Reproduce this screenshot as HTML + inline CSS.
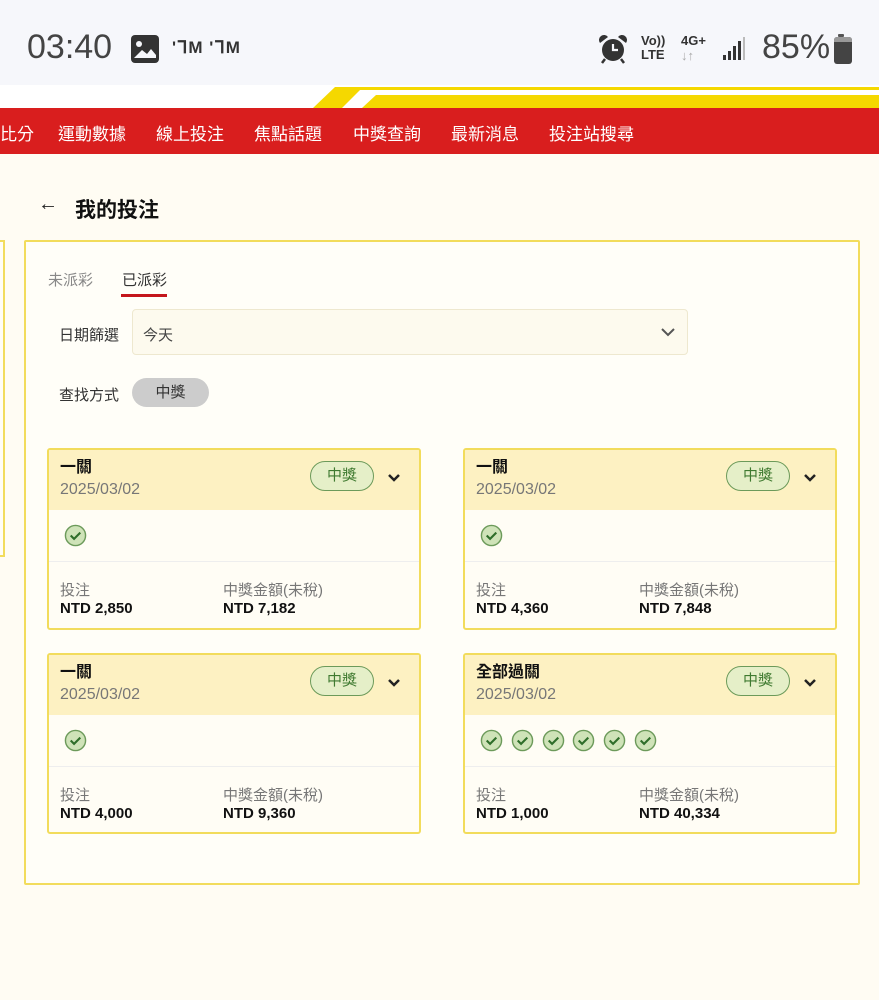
<!DOCTYPE html>
<html><head><meta charset="utf-8"><style>
*{margin:0;padding:0;box-sizing:border-box}
body{width:879px;height:1000px;position:relative;overflow:hidden;background:#fffcf3;font-family:"Liberation Sans","Noto Sans CJK TC",sans-serif;color:#222}
.a{position:absolute}
.status{left:0;top:0;width:879px;height:85px;background:#f6f7fb}
.nav{left:0;top:108px;width:879px;height:46px;background:#d91e1e;color:#fff;font-size:17px}
.nav span{position:absolute;top:12px}
.card{position:absolute;width:374px;border:2px solid #f2dc5c;border-radius:3px;background:#fffdf5;overflow:hidden}
.ch{height:60px;background:#fdf1c2;position:relative}
.ct{position:absolute;left:11px;top:8px;font-size:16px;line-height:20px;font-weight:bold;color:#111}
.cd{position:absolute;left:11px;top:30px;font-size:16px;line-height:20px;color:#777}
.badge{position:absolute;left:261px;top:11px;width:64px;height:30px;border:1.5px solid #6c9a5a;border-radius:15px;background:#e5efc8;color:#3f7a30;font-size:15px;text-align:center;line-height:27px}
.chev{position:absolute;left:338px;top:23px}
.cc{height:52px;border-bottom:1px solid #eee;position:relative}
.chk{position:absolute;top:14px;width:23px;height:23px}
.cb{position:relative;height:66px}
.l1{position:absolute;top:20px;font-size:15px;line-height:18px;color:#777}
.l2{position:absolute;top:38px;font-size:15px;line-height:18px;font-weight:bold;color:#111}
</style></head><body>
<div class="a status">
<div class="a" style="left:27px;top:28px;font-size:34px;color:#444">03:40</div>
<div class="a" style="left:131px;top:35px;width:28px;height:28px;background:#333;border-radius:4px"><svg width="28" height="28"><circle cx="8" cy="9" r="3" fill="#f6f7fb"/><path d="M3 23 L11 15 L16 19 L20 14 L25 20 L25 23Z" fill="#f6f7fb"/></svg></div>
<div class="a" style="left:172px;top:38px;font-size:17px;color:#333;font-weight:bold;letter-spacing:1px">'ᒣM 'ᒣM</div>
<svg class="a" style="left:598px;top:34px" width="30" height="30"><path d="M2 9 A5 5 0 0 1 10 3Z M28 9 A5 5 0 0 0 20 3Z" fill="#333"/><circle cx="15" cy="16" r="11" fill="#333"/><path d="M15 10 V16 H20" stroke="#f6f7fb" stroke-width="2.2" fill="none"/><path d="M7 25 L4 29 M23 25 L26 29" stroke="#333" stroke-width="2.5"/></svg>
<div class="a" style="left:641px;top:34px;font-size:13px;line-height:14px;color:#333;font-weight:bold">Vo))<br>LTE</div>
<div class="a" style="left:681px;top:33px;font-size:13px;line-height:15px;color:#333;font-weight:bold">4G+<br><span style="color:#aaa">↓↑</span></div>
<svg class="a" style="left:722px;top:36px" width="26" height="26"><rect x="1" y="19" width="3" height="5" fill="#333"/><rect x="6" y="15" width="3" height="9" fill="#333"/><rect x="11" y="10" width="3" height="14" fill="#333"/><rect x="16" y="5" width="3" height="19" fill="#333"/><rect x="21" y="1" width="2" height="23" fill="#bbb"/></svg>
<div class="a" style="left:762px;top:28px;font-size:34px;color:#444">85%</div>
<div class="a" style="left:838px;top:34px;width:6px;height:3px;background:#555;border-radius:1px"></div>
<div class="a" style="left:834px;top:37px;width:18px;height:27px;background:#444;border-radius:3px"></div>
<div class="a" style="left:834px;top:37px;width:18px;height:5px;background:#999;border-radius:3px 3px 0 0"></div>
</div>
<div class="a" style="left:0;top:85px;width:879px;height:23px;background:#fff"></div>
<svg class="a" style="left:300px;top:85px" width="579" height="23"><polygon points="13,23 35,2 579,2 579,5 60,5 42,23" fill="#f5d800"/><polygon points="62,23 76,10 579,10 579,23" fill="#f5d800"/></svg>
<div class="a nav"><span style="left:0">比分</span><span style="left:58px">運動數據</span><span style="left:156px">線上投注</span><span style="left:254px">焦點話題</span><span style="left:353px">中獎查詢</span><span style="left:451px">最新消息</span><span style="left:549px">投注站搜尋</span></div>
<div class="a" style="left:38px;top:193px;font-size:20px">←</div>
<div class="a" style="left:75px;top:194px;font-size:21px;font-weight:bold;color:#111">我的投注</div>
<div class="a" style="left:-10px;top:240px;width:15px;height:317px;border:2px solid #f2dc5c;background:#fffdf5"></div>
<div class="a" style="left:24px;top:240px;width:836px;height:645px;border:2px solid #f2dc5c;background:#fffef8;border-radius:2px"></div>
<div class="a" style="left:48px;top:269px;font-size:15px;color:#888">未派彩</div>
<div class="a" style="left:122px;top:269px;font-size:15px;color:#333">已派彩</div>
<div class="a" style="left:121px;top:294px;width:46px;height:3px;background:#c4161c"></div>
<div class="a" style="left:59px;top:324px;font-size:15px;color:#333">日期篩選</div>
<div class="a" style="left:132px;top:309px;width:556px;height:46px;border:1px solid #eee8cf;border-radius:4px;background:#fdfaee"></div>
<div class="a" style="left:143px;top:324px;font-size:15px;color:#444">今天</div>
<svg class="a" style="left:660px;top:326px" width="16" height="12"><path d="M2 3 L8 9 L14 3" stroke="#555" stroke-width="2" fill="none"/></svg>
<div class="a" style="left:59px;top:384px;font-size:15px;color:#333">查找方式</div>
<div class="a" style="left:132px;top:378px;width:77px;height:29px;border-radius:15px;background:#ccc;font-size:15px;text-align:center;line-height:29px;color:#333">中獎</div>

<div class="card" style="left:47px;top:448px;height:182px"><div class="ch"><div class="ct">一關</div><div class="cd">2025/03/02</div><div class="badge">中獎</div><svg class="chev" width="14" height="10"><path d="M2 2 L7 7 L12 2" stroke="#222" stroke-width="2.5" fill="none"/></svg></div><div class="cc"><svg class="chk" style="left:15px" viewBox="0 0 24 24"><circle cx="12" cy="12" r="10.5" fill="#cfe3b8" stroke="#6c9a5a" stroke-width="1.5"/><path d="M7 12 L10.5 15.5 L17 9" stroke="#2f6e2a" stroke-width="2.2" fill="none"/></svg></div><div class="cb"><div class="l1" style="left:11px">投注</div><div class="l2" style="left:11px">NTD 2,850</div><div class="l1" style="left:174px">中獎金額(未稅)</div><div class="l2" style="left:174px">NTD 7,182</div></div></div>

<div class="card" style="left:463px;top:448px;height:182px"><div class="ch"><div class="ct">一關</div><div class="cd">2025/03/02</div><div class="badge">中獎</div><svg class="chev" width="14" height="10"><path d="M2 2 L7 7 L12 2" stroke="#222" stroke-width="2.5" fill="none"/></svg></div><div class="cc"><svg class="chk" style="left:15px" viewBox="0 0 24 24"><circle cx="12" cy="12" r="10.5" fill="#cfe3b8" stroke="#6c9a5a" stroke-width="1.5"/><path d="M7 12 L10.5 15.5 L17 9" stroke="#2f6e2a" stroke-width="2.2" fill="none"/></svg></div><div class="cb"><div class="l1" style="left:11px">投注</div><div class="l2" style="left:11px">NTD 4,360</div><div class="l1" style="left:174px">中獎金額(未稅)</div><div class="l2" style="left:174px">NTD 7,848</div></div></div>

<div class="card" style="left:47px;top:653px;height:181px"><div class="ch"><div class="ct">一關</div><div class="cd">2025/03/02</div><div class="badge">中獎</div><svg class="chev" width="14" height="10"><path d="M2 2 L7 7 L12 2" stroke="#222" stroke-width="2.5" fill="none"/></svg></div><div class="cc"><svg class="chk" style="left:15px" viewBox="0 0 24 24"><circle cx="12" cy="12" r="10.5" fill="#cfe3b8" stroke="#6c9a5a" stroke-width="1.5"/><path d="M7 12 L10.5 15.5 L17 9" stroke="#2f6e2a" stroke-width="2.2" fill="none"/></svg></div><div class="cb"><div class="l1" style="left:11px">投注</div><div class="l2" style="left:11px">NTD 4,000</div><div class="l1" style="left:174px">中獎金額(未稅)</div><div class="l2" style="left:174px">NTD 9,360</div></div></div>

<div class="card" style="left:463px;top:653px;height:181px"><div class="ch"><div class="ct">全部過關</div><div class="cd">2025/03/02</div><div class="badge">中獎</div><svg class="chev" width="14" height="10"><path d="M2 2 L7 7 L12 2" stroke="#222" stroke-width="2.5" fill="none"/></svg></div><div class="cc">
<svg class="chk" style="left:15px" viewBox="0 0 24 24"><circle cx="12" cy="12" r="10.5" fill="#cfe3b8" stroke="#6c9a5a" stroke-width="1.5"/><path d="M7 12 L10.5 15.5 L17 9" stroke="#2f6e2a" stroke-width="2.2" fill="none"/></svg>
<svg class="chk" style="left:46px" viewBox="0 0 24 24"><circle cx="12" cy="12" r="10.5" fill="#cfe3b8" stroke="#6c9a5a" stroke-width="1.5"/><path d="M7 12 L10.5 15.5 L17 9" stroke="#2f6e2a" stroke-width="2.2" fill="none"/></svg>
<svg class="chk" style="left:77px" viewBox="0 0 24 24"><circle cx="12" cy="12" r="10.5" fill="#cfe3b8" stroke="#6c9a5a" stroke-width="1.5"/><path d="M7 12 L10.5 15.5 L17 9" stroke="#2f6e2a" stroke-width="2.2" fill="none"/></svg>
<svg class="chk" style="left:107px" viewBox="0 0 24 24"><circle cx="12" cy="12" r="10.5" fill="#cfe3b8" stroke="#6c9a5a" stroke-width="1.5"/><path d="M7 12 L10.5 15.5 L17 9" stroke="#2f6e2a" stroke-width="2.2" fill="none"/></svg>
<svg class="chk" style="left:138px" viewBox="0 0 24 24"><circle cx="12" cy="12" r="10.5" fill="#cfe3b8" stroke="#6c9a5a" stroke-width="1.5"/><path d="M7 12 L10.5 15.5 L17 9" stroke="#2f6e2a" stroke-width="2.2" fill="none"/></svg>
<svg class="chk" style="left:169px" viewBox="0 0 24 24"><circle cx="12" cy="12" r="10.5" fill="#cfe3b8" stroke="#6c9a5a" stroke-width="1.5"/><path d="M7 12 L10.5 15.5 L17 9" stroke="#2f6e2a" stroke-width="2.2" fill="none"/></svg>
</div><div class="cb"><div class="l1" style="left:11px">投注</div><div class="l2" style="left:11px">NTD 1,000</div><div class="l1" style="left:174px">中獎金額(未稅)</div><div class="l2" style="left:174px">NTD 40,334</div></div></div>
</body></html>
